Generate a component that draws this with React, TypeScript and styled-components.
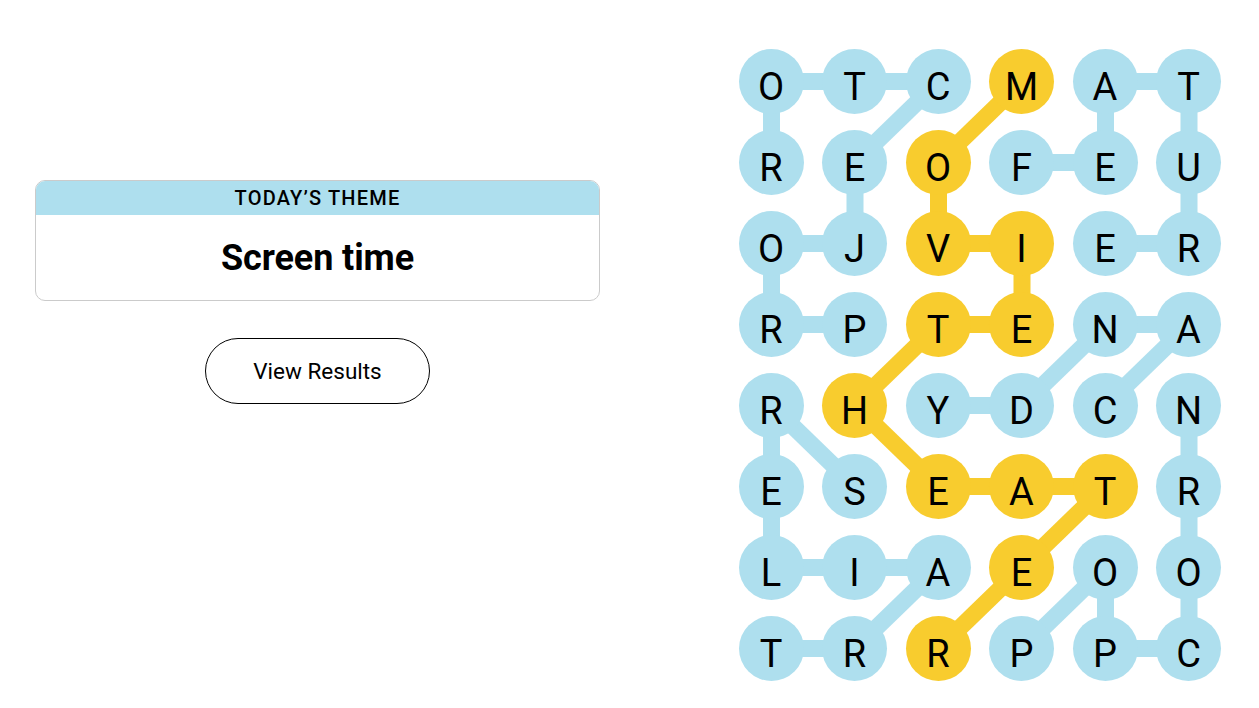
import React from 'react';
import styled, { createGlobalStyle } from 'styled-components';

const BLUE = '#aedfee';
const YELLOW = '#f8cc2e';

const CELL = 65;
const COL_GAP = 18.5;
const ROW_GAP = 16;

const LETTERS = [
  'OTCMAT',
  'REOFEU',
  'OJVIER',
  'RPTENA',
  'RHYDCN',
  'ESEATR',
  'LIAEOO',
  'TRRPPC',
];

type Cell = [number, number];

// found words, each as a path of [row, col]
const WORDS: { path: Cell[]; spangram?: boolean }[] = [
  { path: [[3, 1], [3, 0], [2, 0], [2, 1], [1, 1], [0, 2], [0, 1], [0, 0], [1, 0]] },
  { path: [[1, 3], [1, 4], [0, 4], [0, 5], [1, 5], [2, 5], [2, 4]] },
  { path: [[4, 4], [3, 5], [3, 4], [4, 3], [4, 2]] },
  { path: [[7, 0], [7, 1], [6, 2], [6, 1], [6, 0], [5, 0], [4, 0], [5, 1]] },
  { path: [[7, 3], [6, 4], [7, 4], [7, 5], [6, 5], [5, 5], [4, 5]] },
  {
    spangram: true,
    path: [[0, 3], [1, 2], [2, 2], [2, 3], [3, 3], [3, 2], [4, 1], [5, 2], [5, 3], [5, 4], [6, 3], [7, 2]],
  },
];

const GlobalStyle = createGlobalStyle`
  body {
    margin: 0;
    background: #fff;
    font-family: Roboto, 'Liberation Sans', sans-serif;
    color: #000;
  }
`;

const Page = styled.div`
  display: flex;
  align-items: flex-start;
  width: 1259px;
  height: 708px;
  overflow: hidden;
`;

const InfoPanel = styled.div`
  width: 565px;
  margin: 180px 0 0 35px;
  display: flex;
  flex-direction: column;
  align-items: center;
`;

const ThemeCard = styled.div`
  width: 100%;
  box-sizing: border-box;
  border: 1px solid #cbcbcb;
  border-radius: 10px;
  overflow: hidden;
`;

const ThemeHeader = styled.div`
  height: 34px;
  background: ${BLUE};
  display: flex;
  align-items: center;
  justify-content: center;
  font-size: 20px;
  font-weight: 500;
  letter-spacing: 1.2px;
  text-transform: uppercase;
`;

const ThemeTitle = styled.div`
  height: 85px;
  display: flex;
  align-items: center;
  justify-content: center;
  font-size: 36px;
  font-weight: 700;
  letter-spacing: -0.1px;
`;

const ResultsButton = styled.button`
  margin-top: 37px;
  width: 225px;
  height: 66px;
  border: 1px solid #000;
  border-radius: 33px;
  background: #fff;
  font-family: Roboto, 'Liberation Sans', sans-serif;
  font-size: 22.5px;
  color: #000;
  cursor: pointer;
`;

const Board = styled.div`
  position: relative;
  margin: 49px 0 0 138.5px;
`;

const Lines = styled.svg`
  position: absolute;
  inset: 0;
  width: 100%;
  height: 100%;
`;

const Grid = styled.div`
  position: relative;
  display: grid;
  grid-template-columns: repeat(6, ${CELL}px);
  grid-auto-rows: ${CELL}px;
  column-gap: ${COL_GAP}px;
  row-gap: ${ROW_GAP}px;
`;

const Letter = styled.div<{ $spangram?: boolean }>`
  box-sizing: border-box;
  width: ${CELL}px;
  height: ${CELL}px;
  padding-top: 10px;
  border-radius: 50%;
  background: ${(p) => (p.$spangram ? YELLOW : BLUE)};
  display: flex;
  align-items: center;
  justify-content: center;
  font-size: 38px;
  font-weight: 400;
`;

const center = ([r, c]: Cell) => ({
  x: c * (CELL + COL_GAP) + CELL / 2,
  y: r * (CELL + ROW_GAP) + CELL / 2,
});

export default function App() {
  const spangramCells = new Set(
    WORDS.filter((w) => w.spangram).flatMap((w) => w.path.map(([r, c]) => `${r}-${c}`))
  );

  return (
    <>
      <GlobalStyle />
      <Page>
        <InfoPanel>
          <ThemeCard>
            <ThemeHeader>Today’s theme</ThemeHeader>
            <ThemeTitle>Screen time</ThemeTitle>
          </ThemeCard>
          <ResultsButton>View Results</ResultsButton>
        </InfoPanel>

        <Board>
          <Lines>
            {WORDS.map((w, wi) =>
              w.path.slice(1).map((cell, i) => {
                const a = center(w.path[i]);
                const b = center(cell);
                return (
                  <line
                    key={`${wi}-${i}`}
                    x1={a.x}
                    y1={a.y}
                    x2={b.x}
                    y2={b.y}
                    stroke={w.spangram ? YELLOW : BLUE}
                    strokeWidth={17}
                  />
                );
              })
            )}
          </Lines>
          <Grid>
            {LETTERS.map((row, r) =>
              row.split('').map((ch, c) => (
                <Letter key={`${r}-${c}`} $spangram={spangramCells.has(`${r}-${c}`)}>
                  {ch}
                </Letter>
              ))
            )}
          </Grid>
        </Board>
      </Page>
    </>
  );
}
